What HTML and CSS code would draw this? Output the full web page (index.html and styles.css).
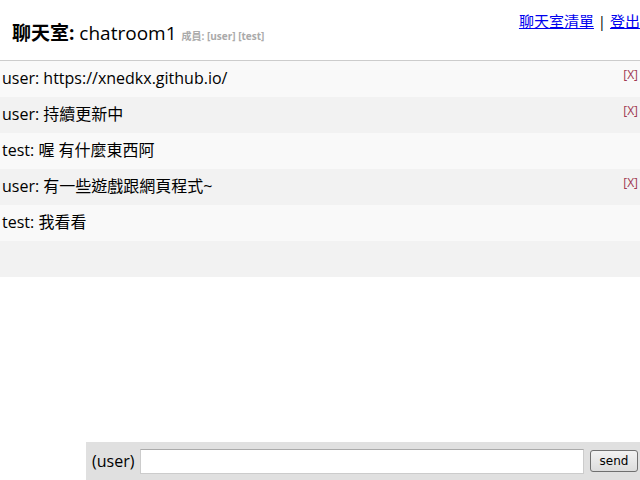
FILE: index.html
```html
<!DOCTYPE html>
<html>
<head>
<meta charset="utf-8">
<link rel="stylesheet" href="styles.css">
</head>
<body>
<div class="header">
  <h1 class="title"><b>聊天室:</b> chatroom1 <span class="members">成員: [user] [test]</span></h1>
  <div class="links"><a href="#">聊天室清單</a> | <a href="#">登出</a></div>
</div>
<div class="messages">
  <div class="msg"><span><span class="name">user:</span> https://xnedkx.github.io/</span><a class="del">[X]</a></div>
  <div class="msg"><span><span class="name">user:</span> 持續更新中</span><a class="del">[X]</a></div>
  <div class="msg"><span><span class="name">test:</span> 喔 有什麼東西阿</span></div>
  <div class="msg"><span><span class="name">user:</span> 有一些遊戲跟網頁程式~</span><a class="del">[X]</a></div>
  <div class="msg"><span><span class="name">test:</span> 我看看</span></div>
  <div class="msg empty"></div>
</div>
<div class="inputbar">
  <span class="me">(user)</span>
  <input class="text" type="text">
  <button class="send">send</button>
</div>
</body>
</html>
```
FILE: styles.css
```css
html, body { margin: 0; padding: 0; }
body {
  font-family: "Open Sans", "Noto Sans CJK TC", sans-serif;
  font-size: 16px;
  color: #000;
  background: #fff;
  width: 640px;
  height: 480px;
  position: relative;
  overflow: hidden;
}
.header {
  height: 60px;
  border-bottom: 1px solid #ccc;
  display: flex;
  justify-content: space-between;
  align-items: flex-start;
}
.title {
  margin: 0;
  padding: 20px 0 0 12px;
  font-size: 19px;
  font-weight: normal;
  line-height: 26px;
}
.title b { font-weight: bold; }
.members {
  font-size: 10px;
  color: #aaa;
  font-weight: bold;
}
.links {
  padding-top: 11px;
  font-size: 15px;
  line-height: 20px;
}
.links a { color: #00e; text-decoration: underline; }
.msg {
  height: 36px;
  display: flex;
  justify-content: space-between;
  align-items: flex-start;
  padding-left: 2px;
  line-height: 34px;
}
.msg:nth-child(odd) { background: #f9f9f9; }
.msg:nth-child(even) { background: #f2f2f2; }
.del {
  font-size: 12px;
  line-height: 14px;
  padding-top: 7px;
  padding-right: 2px;
  color: #a03850;
}
.inputbar {
  position: absolute;
  left: 86px;
  right: 0;
  bottom: 0;
  height: 38px;
  background: #e0e0e0;
  display: flex;
  align-items: center;
  gap: 6px;
  padding: 0 2px 0 6px;
  box-sizing: border-box;
}
.me { font-size: 16px; }
.text {
  flex: 1;
  height: 25px;
  box-sizing: border-box;
  border: 1px solid #ccc;
  border-top-color: #aaa;
  background: #fff;
  margin: 0;
}
.send {
  width: 48px;
  height: 22px;
  font-family: "DejaVu Sans", sans-serif;
  font-size: 12px;
  border: 1px solid #707070;
  border-radius: 3px;
  background: linear-gradient(#f2f2f2, #dcdcdc);
  padding: 0;
  margin: 0;
}
```
